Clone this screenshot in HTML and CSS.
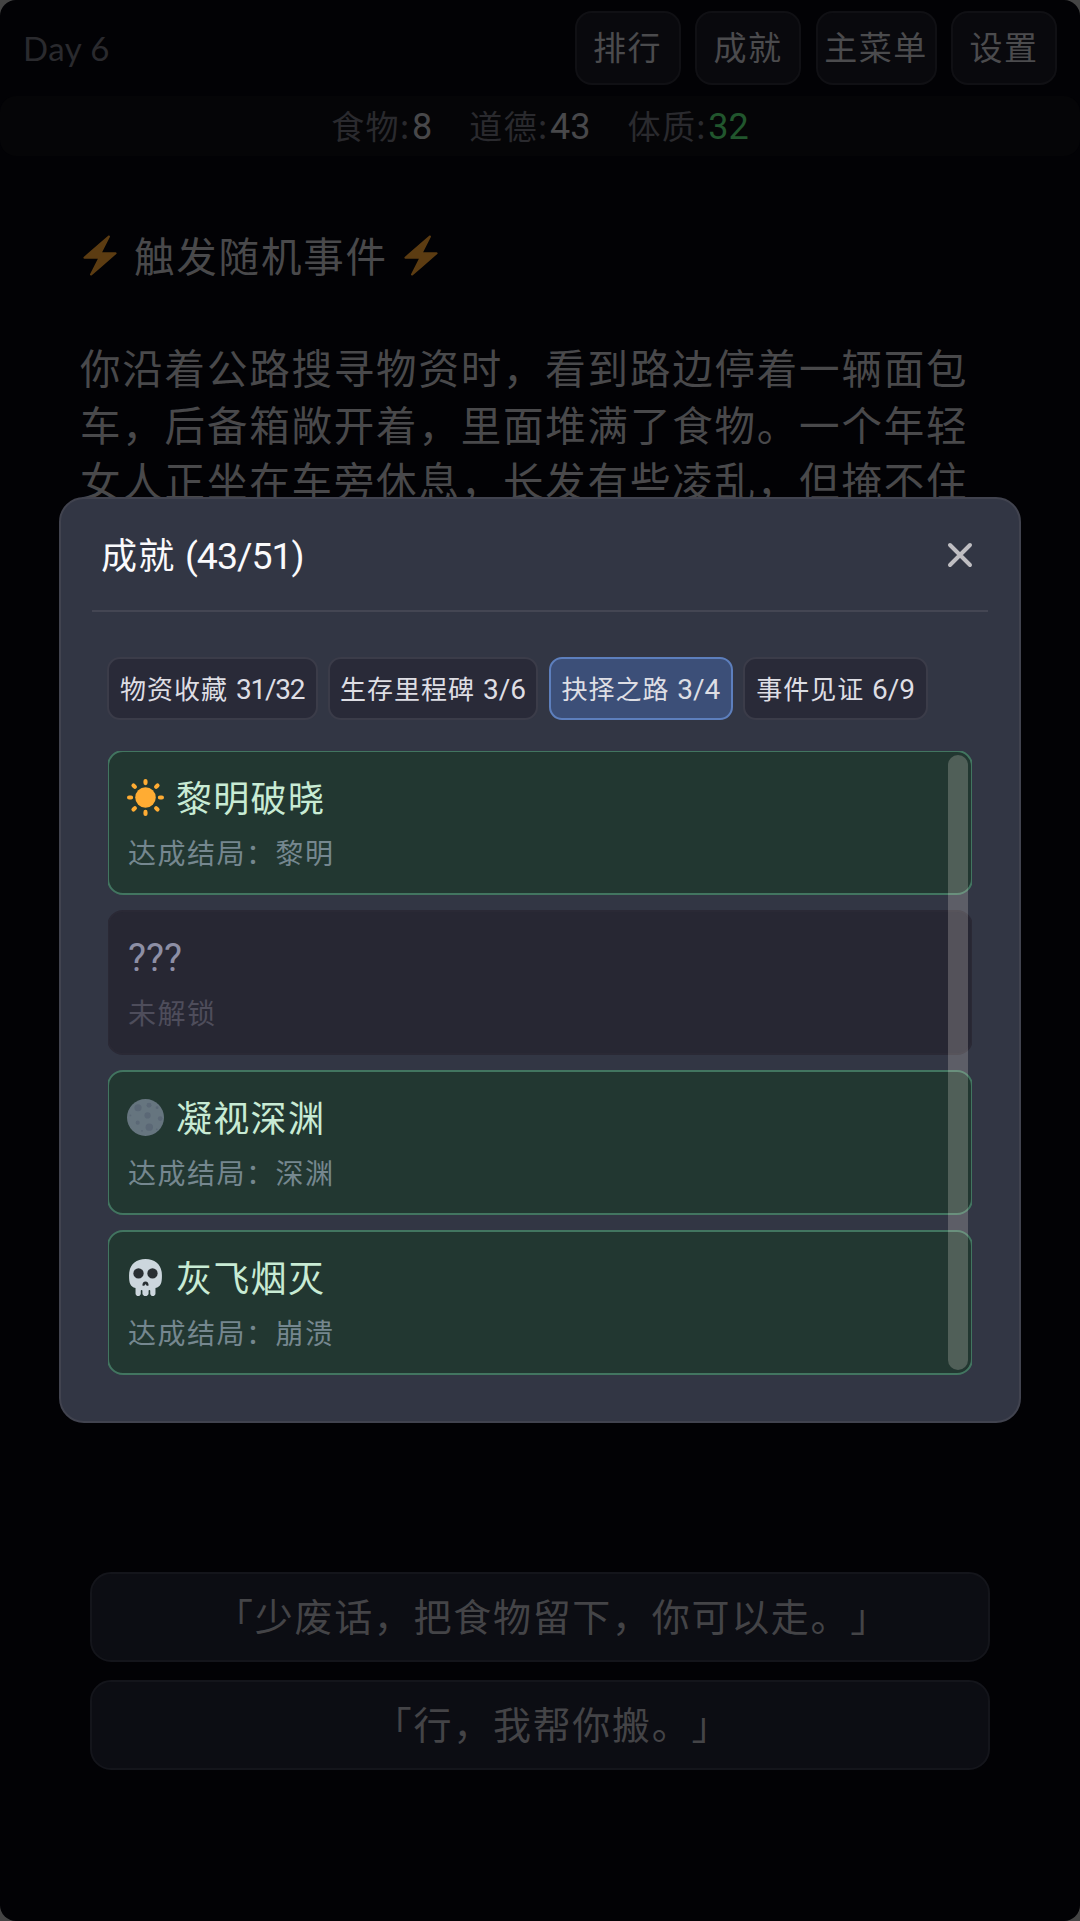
FILE: index.html
```
<!DOCTYPE html>
<html lang="zh-CN">
<head>
<meta charset="utf-8">
<title>Day 6</title>
<link rel="stylesheet" href="styles.css">
</head>
<body>
<svg class="defs" width="0" height="0" aria-hidden="true">
  <symbol id="zap" viewBox="0 0 36 36"><path d="M32.938 15.651C32.792 15.26 32.418 15 32 15H19.925L26.89 1.458c.219-.426.106-.947-.271-1.243C26.437.071 26.218 0 26 0c-.233 0-.466.082-.653.243L18 6.588 3.347 19.243c-.316.273-.43.714-.284 1.105S3.582 21 4 21h12.075L9.11 34.542c-.219.426-.106.947.271 1.243.182.144.401.215.619.215.233 0 .466-.082.653-.243L18 29.412l14.653-12.655c.317-.273.43-.714.285-1.106z"/></symbol>
</svg>
<div class="app">
  <header class="topbar">
    <span class="day">Day 6</span>
    <nav class="menu">
      <button class="menu-btn">排行</button>
      <button class="menu-btn">成就</button>
      <button class="menu-btn menu-btn--wide">主菜单</button>
      <button class="menu-btn">设置</button>
    </nav>
  </header>
  <div class="stats">
    <div class="stat">食物<span class="colon">:</span><b class="stat-value">8</b></div>
    <div class="stat">道德<span class="colon">:</span><b class="stat-value">43</b></div>
    <div class="stat">体质<span class="colon">:</span><b class="stat-value stat-value--good">32</b></div>
  </div>
  <main class="story">
    <h1 class="story-title"><svg class="zap"><use href="#zap"/></svg><span>触发随机事件</span><svg class="zap"><use href="#zap"/></svg></h1>
    <p class="story-text">你沿着公路搜寻物资时，看到路边停着一辆面包<br>车，后备箱敞开着，里面堆满了食物。一个年轻<br>女人正坐在车旁休息，长发有些凌乱，但掩不住</p>
  </main>
  <div class="choices">
    <button class="choice">「少废话，把食物留下，你可以走。」</button>
    <button class="choice">「行，我帮你搬。」</button>
  </div>
</div>

<section class="modal">
  <header class="modal-head">
    <h2 class="modal-title">成就 <span class="num">(43/51)</span></h2>
    <svg class="close" viewBox="0 0 26 26"><path d="M3 3l20 20M23 3L3 23"/></svg>
  </header>
  <div class="modal-body">
    <div class="tabs">
      <button class="tab tab--wide">物资收藏 <span class="num num--tight">31/32</span></button>
      <button class="tab tab--wide">生存里程碑 <span class="num">3/6</span></button>
      <button class="tab tab--active">抉择之路 <span class="num">3/4</span></button>
      <button class="tab">事件见证 <span class="num">6/9</span></button>
    </div>
    <div class="list">
      <div class="cards">
        <article class="card">
          <h3 class="card-title">
            <svg class="emoji" viewBox="0 0 36 36"><circle cx="18" cy="18" r="10" fill="#ffac33"/><path class="rays" d="M18 2v2M18 32v2M2 18h2M32 18h2M6.3 6.3l1.4 1.4M28.3 28.3l1.4 1.4M29.7 6.3l-1.4 1.4M7.7 28.3l-1.4 1.4"/></svg>
            <span>黎明破晓</span>
          </h3>
          <p class="card-desc">达成结局：黎明</p>
        </article>
        <article class="card card--locked">
          <h3 class="card-title"><span class="unknown">???</span></h3>
          <p class="card-desc">未解锁</p>
        </article>
        <article class="card">
          <h3 class="card-title">
            <svg class="emoji" viewBox="0 0 36 36"><circle cx="18" cy="18" r="18" fill="#66757f"/><g fill="#5b6876"><circle cx="10.7" cy="8.5" r="3.5"/><circle cx="21.4" cy="6" r="2.4"/><circle cx="29.3" cy="8.4" r="1.4"/><circle cx="20" cy="16" r="3"/><circle cx="32.3" cy="19" r="2.3"/><circle cx="10.4" cy="23" r="2"/><circle cx="21.7" cy="27.4" r="3.6"/><circle cx="14.6" cy="31" r=".9"/><circle cx="3.3" cy="16" r=".9"/><circle cx="29" cy="29.5" r=".8"/></g></svg>
            <span>凝视深渊</span>
          </h3>
          <p class="card-desc">达成结局：深渊</p>
        </article>
        <article class="card">
          <h3 class="card-title">
            <svg class="emoji" viewBox="0 0 36 36"><path fill="#ccd6dd" d="M34 16C34 6 28 0 18 0S2 6 2 16c0 7.300 1 11 6.300 12.200V33.500c0 1.500 1.200 2.500 2.600 2.500s2.500-1 2.500-2.500V31a.8.8 0 0 1 1.600 0v2.500c0 1.500 1.500 2.500 3 2.500s3-1 3-2.500V31a.8.8 0 0 1 1.600 0v2.500c0 1.500 1.100 2.500 2.500 2.500s2.600-1 2.600-2.500v-5.300C33 27 34 23.300 34 16z"/><g fill="#292f33"><circle cx="11.200" cy="14" r="5"/><circle cx="24.800" cy="14" r="5"/><path d="M18 22c-2 0-3 1.800-3 3.200 0 1.200 1.800 1.200 2.200.3.200-.6.600-1 .8-1s.6.400.8 1c.4.900 2.200.9 2.200-.3 0-1.400-1-3.200-3-3.200z"/></g></svg>
            <span>灰飞烟灭</span>
          </h3>
          <p class="card-desc">达成结局：崩溃</p>
        </article>
      </div>
      <div class="scrollbar"></div>
    </div>
  </div>
</section>
</body>
</html>
```
FILE: styles.css
```
* { box-sizing: border-box; }

html { background: #444444; }

body {
  margin: 0;
  position: relative;
  width: 1080px;
  height: 1921px;
  overflow: hidden;
  font-family: "Noto Sans CJK SC", sans-serif;
  font-weight: 400;
  text-spacing-trim: space-all;
}

h1, h2, h3, p { margin: 0; font-weight: 400; }

button {
  padding: 0;
  font: inherit;
  letter-spacing: inherit;
  white-space: nowrap;
}

.defs { position: absolute; }

.num { font-family: Roboto, sans-serif; }

/* Game screen */
.app {
  display: flex;
  flex-direction: column;
  height: 1921px;
  border-radius: 16px;
  background: #020205;
  color: #49494b;
}

.topbar {
  display: flex;
  justify-content: space-between;
  align-items: center;
  height: 96px;
  padding: 0 23px;
}

.day {
  font-family: Lato, sans-serif;
  font-size: 33px;
  letter-spacing: 0.500px;
  color: #2a2a2e;
}

.menu { display: flex; gap: 14.500px; }

.menu-btn {
  width: 106px;
  height: 74px;
  padding-bottom: 4px;
  border: 2px solid #101014;
  border-radius: 17px;
  background: #09090d;
  color: #4b4b4d;
  font-size: 33px;
  letter-spacing: 1.500px;
}

.menu-btn--wide { width: 121px; }

.stats {
  display: flex;
  justify-content: center;
  align-items: center;
  gap: 37px;
  height: 60px;
  padding-bottom: 2px;
  border-radius: 16px;
  background: #050507;
}

.stat {
  display: flex;
  align-items: center;
  color: #2a2a2e;
  font-size: 33px;
  letter-spacing: 1.400px;
}

.colon { width: 12px; }

.stat-value {
  padding-top: 4px;
  font-family: Roboto, sans-serif;
  font-size: 36px;
  font-weight: 400;
  letter-spacing: 0;
  color: #48484a;
}

.stat-value--good { color: #21562d; }

.story {
  flex: 1;
  padding: 71px 80px 0;
  font-size: 40.500px;
  line-height: 56.200px;
  letter-spacing: 1.800px;
  white-space: nowrap;
}

.story-title {
  display: flex;
  align-items: center;
  gap: 14px;
  margin-bottom: 56.200px;
  font-size: inherit;
}

.zap { width: 40px; height: 43px; }
.zap { fill: #5c3c12; }
.zap + span { margin-right: -1px; }

.story-text { font-size: inherit; }

.choices {
  display: flex;
  flex-direction: column;
  gap: 18px;
  padding: 0 90px 151px;
}

.choice {
  height: 90px;
  padding: 0 0 5px 25px;
  border: 2px solid #14151b;
  border-radius: 21px;
  background: #0c0d13;
  color: #444447;
  font-size: 38px;
  letter-spacing: 1.700px;
}

/* Achievements dialog */
.modal {
  position: absolute;
  left: 59px;
  top: 497px;
  width: 962px;
  height: 926px;
  padding: 0 31px;
  border: 2px solid #41434f;
  border-radius: 25px;
  background: #323644;
}

.modal-head {
  display: flex;
  justify-content: space-between;
  align-items: center;
  height: 113px;
  padding: 0 15px 0 9px;
  border-bottom: 2px solid #444653;
}

.modal-title {
  padding-bottom: 4px;
  color: #fafafc;
  font-size: 36px;
  letter-spacing: 1.300px;
}

.modal-title .num { font-size: 37.500px; letter-spacing: -1px; }

.close {
  width: 26px;
  height: 26px;
  fill: none;
  stroke: #bfbec2;
  stroke-width: 4;
  stroke-linecap: round;
}

.modal-body { padding: 45px 16px 0; }

.tabs { display: flex; gap: 10.300px; margin-left: -1px; }

.tab {
  width: 184.500px;
  height: 63px;
  padding-bottom: 2px;
  border: 2px solid #3b3c49;
  border-radius: 13px;
  background: #292a38;
  color: #dedee4;
  font-size: 26px;
  letter-spacing: 1px;
}

.tab .num { margin-left: 1px; font-size: 28px; letter-spacing: 0; }
.tab .num--tight { letter-spacing: -1.200px; }

.tab--wide { width: 210.500px; }

.tab--active {
  border-color: #5d7fbd;
  background: #3c4f78;
}

.list {
  position: relative;
  height: 624px;
  margin-top: 31px;
  overflow: hidden;
}

.cards {
  display: flex;
  flex-direction: column;
  gap: 15px;
  margin: -1px -1px 0;
}

.card {
  height: 145px;
  padding: 18px 18px;
  border: 2px solid #427560;
  border-radius: 16px;
  background: #223731;
}

.card-title {
  display: flex;
  align-items: center;
  gap: 12px;
  height: 54px;
  color: #c8ebd4;
  font-size: 36px;
  letter-spacing: 1.300px;
}

.card-title span { padding-bottom: 2px; }

.emoji { width: 37px; height: 37px; }

.rays {
  fill: none;
  stroke: #ffac33;
  stroke-width: 4;
  stroke-linecap: round;
}

.card-desc {
  height: 42px;
  margin: 7px 0 0 1px;
  color: #75878f;
  font-size: 28px;
  line-height: 42px;
  letter-spacing: 1.500px;
}

.card--locked { border-color: #2a2935; background: #272733; }
.card--locked .card-title { color: #8d8fa5; }
.card--locked .card-desc { color: #4e4d5b; }

.card-title .unknown {
  padding: 1px 0 0 1px;
  font-family: Roboto, sans-serif;
  font-size: 38px;
  letter-spacing: 0;
}

.scrollbar {
  position: absolute;
  top: 4px;
  right: 4px;
  width: 20px;
  height: 615px;
  border-radius: 10px;
  background: rgba(255, 245, 238, 0.21);
}
```
